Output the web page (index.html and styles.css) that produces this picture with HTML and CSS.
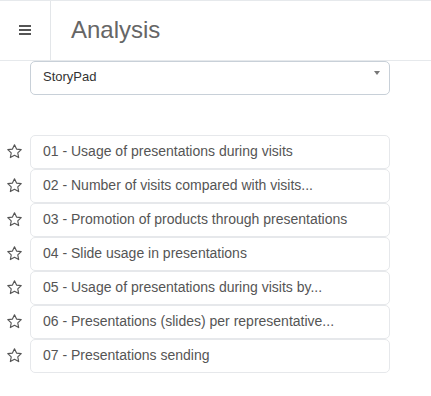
FILE: index.html
```html
<!DOCTYPE html>
<html lang="en">
<head>
  <meta charset="UTF-8">
  <title>Analysis</title>
  <meta name="viewport" content="width=device-width, initial-scale=1.0">
  <link rel="stylesheet" href="styles.css">
</head>
<body>

  <div class="header">
    <div class="menu-btn">
      <span></span><span></span><span></span>
    </div>
    <h1>Analysis</h1>
  </div>

  <div class="select">
    <span>StoryPad</span>
    <span class="caret"></span>
  </div>

  <ul class="reports">
    <li>
      <svg class="star" viewBox="0 0 24 24"><path d="M12 2.5l2.9 6.1 6.6.8-4.9 4.6 1.3 6.6L12 17.3l-5.9 3.3 1.3-6.6-4.9-4.6 6.6-.8z"/></svg>
      <div class="item">01 - Usage of presentations during visits</div>
    </li>
    <li>
      <svg class="star" viewBox="0 0 24 24"><path d="M12 2.5l2.9 6.1 6.6.8-4.9 4.6 1.3 6.6L12 17.3l-5.9 3.3 1.3-6.6-4.9-4.6 6.6-.8z"/></svg>
      <div class="item">02 - Number of visits compared with visits...</div>
    </li>
    <li>
      <svg class="star" viewBox="0 0 24 24"><path d="M12 2.5l2.9 6.1 6.6.8-4.9 4.6 1.3 6.6L12 17.3l-5.9 3.3 1.3-6.6-4.9-4.6 6.6-.8z"/></svg>
      <div class="item">03 - Promotion of products through presentations</div>
    </li>
    <li>
      <svg class="star" viewBox="0 0 24 24"><path d="M12 2.5l2.9 6.1 6.6.8-4.9 4.6 1.3 6.6L12 17.3l-5.9 3.3 1.3-6.6-4.9-4.6 6.6-.8z"/></svg>
      <div class="item">04 - Slide usage in presentations</div>
    </li>
    <li>
      <svg class="star" viewBox="0 0 24 24"><path d="M12 2.5l2.9 6.1 6.6.8-4.9 4.6 1.3 6.6L12 17.3l-5.9 3.3 1.3-6.6-4.9-4.6 6.6-.8z"/></svg>
      <div class="item">05 - Usage of presentations during visits by...</div>
    </li>
    <li>
      <svg class="star" viewBox="0 0 24 24"><path d="M12 2.5l2.9 6.1 6.6.8-4.9 4.6 1.3 6.6L12 17.3l-5.9 3.3 1.3-6.6-4.9-4.6 6.6-.8z"/></svg>
      <div class="item">06 - Presentations (slides) per representative...</div>
    </li>
    <li>
      <svg class="star" viewBox="0 0 24 24"><path d="M12 2.5l2.9 6.1 6.6.8-4.9 4.6 1.3 6.6L12 17.3l-5.9 3.3 1.3-6.6-4.9-4.6 6.6-.8z"/></svg>
      <div class="item">07 - Presentations sending</div>
    </li>
  </ul>

</body>
</html>
```

FILE: styles.css
```css
* {
  margin: 0;
  padding: 0;
  box-sizing: border-box;
}

body {
  font-family: "Liberation Sans", Arial, sans-serif;
  background: #fff;
  color: #555;
}

.header {
  display: flex;
  height: 61px;
  border-top: 1px solid #e6e9ec;
  border-bottom: 1px solid #e6e9ec;
}

.menu-btn {
  width: 51px;
  border-right: 1px solid #e3e6e9;
  display: flex;
  flex-direction: column;
  justify-content: center;
  align-items: center;
  gap: 2px;
  padding-bottom: 1px;
}

.menu-btn span {
  display: block;
  width: 12px;
  height: 2px;
  background: #555;
}

.header h1 {
  font-size: 24px;
  font-weight: normal;
  color: #666;
  padding-left: 20px;
  line-height: 58px;
}

.select {
  margin-left: 30px;
  width: 360px;
  height: 34px;
  border: 1px solid #c8d0d8;
  border-radius: 5px;
  display: flex;
  align-items: center;
  justify-content: space-between;
  padding: 0 9px 4px 12px;
  font-size: 13px;
  color: #333;
}

.caret {
  width: 0;
  height: 0;
  border-left: 3px solid transparent;
  border-right: 3px solid transparent;
  border-top: 4px solid #777;
  margin-bottom: 6px;
}

.reports {
  list-style: none;
  margin-top: 40px;
}

.reports li {
  display: flex;
  align-items: center;
}

.star {
  width: 17px;
  height: 17px;
  margin: 0 7px 2px 6px;
  fill: none;
  stroke: #555;
  stroke-width: 1.6;
  stroke-linejoin: round;
}

.item {
  width: 360px;
  height: 34px;
  border: 1px solid #e6e8eb;
  border-radius: 5px;
  padding: 0 12px 2px;
  display: flex;
  align-items: center;
  font-size: 14px;
  color: #555;
}
```
